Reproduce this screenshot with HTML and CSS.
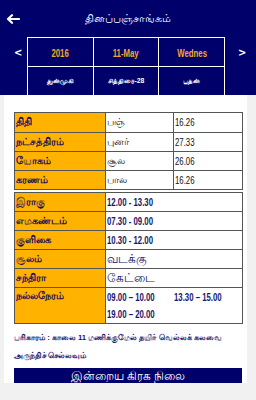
FILE: index.html
```html
<!DOCTYPE html>
<html lang="ta">
<head>
<meta charset="utf-8">
<title>தினப்பஞ்சாங்கம்</title>
<link rel="stylesheet" href="styles.css">
</head>
<body>
<div class="app">
  <header class="topbar">
    <svg class="back" width="14" height="10" viewBox="0 0 14 10" aria-hidden="true">
      <path d="M13 5H2.5M6 1.2L2 5l4 3.8" fill="none" stroke="#fff" stroke-width="2.2" stroke-linecap="round" stroke-linejoin="round"/>
    </svg>
    <h1 class="title">தினப்பஞ்சாங்கம்</h1>
  </header>

  <nav class="datebar">
    <div class="nav-btn prev">&lt;</div>
    <div class="date-grid">
      <div class="cell top"><span class="n c">2016</span></div>
      <div class="cell top"><span class="n c">11-May</span></div>
      <div class="cell top"><span class="n c">Wednes</span></div>
      <div class="cell sub">துன்முகி</div>
      <div class="cell sub">சித்திரை-28</div>
      <div class="cell sub">புதன்</div>
    </div>
    <div class="nav-btn next">&gt;</div>
  </nav>

  <main class="card">
    <table class="panchang t1">
      <colgroup><col class="k1"><col class="k2"><col class="k3"></colgroup>
      <tr class="first"><th>திதி</th><td class="ta">பஞ்</td><td class="num"><span class="n">16.26</span></td></tr>
      <tr><th>நட்சத்திரம்</th><td class="ta">புனர்</td><td class="num"><span class="n">27.33</span></td></tr>
      <tr><th>யோகம்</th><td class="ta">சூல</td><td class="num"><span class="n">26.06</span></td></tr>
      <tr><th>கரணம்</th><td class="ta">பால</td><td class="num"><span class="n">16.26</span></td></tr>
    </table>

    <table class="panchang t2">
      <colgroup><col class="k1"><col class="kv"></colgroup>
      <tr><th>இராகு</th><td class="num"><span class="n">12.00 - 13.30</span></td></tr>
      <tr><th>எமகண்டம்</th><td class="num"><span class="n">07.30 - 09.00</span></td></tr>
      <tr><th>குளிகை</th><td class="num"><span class="n">10.30 - 12.00</span></td></tr>
      <tr><th>சூலம்</th><td class="ta">வடக்கு</td></tr>
      <tr><th>சந்திரா</th><td class="ta">கேட்டை</td></tr>
      <tr class="nalla"><th>நல்லநேரம்</th><td class="num">
        <div class="times"><span class="slot"><span class="n">09.00 – 10.00</span></span><span class="slot"><span class="n">13.30 – 15.00</span></span></div>
        <div class="times"><span class="slot"><span class="n">19.00 – 20.00</span></span></div>
      </td></tr>
    </table>

    <p class="parikaram">பரிகாரம் : காலை 11 மணிக்குமேல் தயிர் வெல்லக் கலவை அருந்திச் செல்லவும்</p>

    <div class="section-bar">இன்றைய கிரக நிலை</div>
  </main>
  <div class="bottom-strip"></div>
</div>
</body>
</html>
```

FILE: styles.css
```css
* { box-sizing: border-box; }
html, body { margin: 0; padding: 0; }
body {
  background: #f1f1f1;
  font-family: "Liberation Sans", "Noto Sans", Arial, sans-serif;
  width: 256px;
  height: 400px;
  overflow: hidden;
}
.app { width: 256px; }

/* condensed look of the app's number font */
.n {
  display: inline-block;
  transform: scaleX(0.78);
  transform-origin: 0 50%;
}
.n.c { transform-origin: 50% 50%; }

.topbar {
  height: 37px;
  background: #00006b;
  display: flex;
  align-items: center;
  padding-left: 6px;
}
.back { display: block; }
.title {
  margin: 0;
  flex: 1;
  text-align: center;
  color: #fff;
  font-size: 11px;
  font-weight: normal;
  padding-right: 20px;
}

.datebar {
  height: 58px;
  background: #00006b;
  display: flex;
}
.nav-btn {
  width: 27px;
  color: #fff;
  font-size: 10px;
  font-weight: bold;
  padding-top: 10px;
  font-family: "DejaVu Sans", sans-serif;
}
.nav-btn.prev { padding-left: 14px; }
.nav-btn.next { width: 31px; padding-left: 13px; }
.date-grid {
  flex: 1;
  display: grid;
  grid-template-columns: 1fr 1fr 1fr;
  grid-template-rows: 29px 29px;
  border-left: 1px solid #fff;
  border-top: 1px solid #fff;
}
.cell {
  border-right: 1px solid #fff;
  border-bottom: 1px solid #fff;
  display: flex;
  align-items: center;
  justify-content: center;
}
.cell.top {
  color: #f0a930;
  font-size: 10px;
  font-weight: bold;
  padding-top: 2px;
}
.cell.sub { color: #fff; font-size: 6.8px; font-weight: bold; }

.card {
  background: #fff;
  margin: 0 9px 0 4px;
  height: 288px;
  overflow: hidden;
  padding: 17px 4px 0 10px;
}

.panchang {
  border-collapse: collapse;
  table-layout: fixed;
  width: 228px;
}
.k1 { width: 91px; }
.k2 { width: 68px; }
.k3 { width: 69px; }
.kv { width: 137px; }
.panchang th, .panchang td {
  border: 1px solid #555;
  padding: 0 1px;
  text-align: left;
  vertical-align: middle;
  white-space: nowrap;
  overflow: hidden;
}
.panchang th {
  background: #ffb300;
  color: #1c0c5c;
  font-weight: bold;
  font-size: 10px;
}
.num { font-size: 10px; }
.ta { font-size: 12px; }
.t1 tr { height: 19px; }
.t1 tr.first { height: 20px; }
.t1 td { color: #111; }
.t1 td.ta { font-size: 9.5px; }
.t2 { margin-top: 2px; }
.t2 tr { height: 19px; }
.t2 td { color: #15156b; font-weight: bold; }
.t2 td.ta { font-weight: normal; color: #15156b; }
.t2 .nalla { height: 36px; }
.t2 .nalla th { vertical-align: top; padding-top: 2px; }
.times { display: flex; height: 17px; align-items: center; }
.slot { width: 73px; }

.parikaram {
  margin: 5px 0 0 0;
  color: #14146e;
  font-size: 7.7px;
  font-weight: bold;
  line-height: 18px;
  width: 232px;
}

.section-bar {
  margin-top: 3px;
  width: 228px;
  height: 18px;
  background: #00006b;
  color: #fff;
  font-size: 12px;
  text-align: center;
  line-height: 17px;
}
.bottom-strip { height: 17px; background: #f1f1f1; }
```
